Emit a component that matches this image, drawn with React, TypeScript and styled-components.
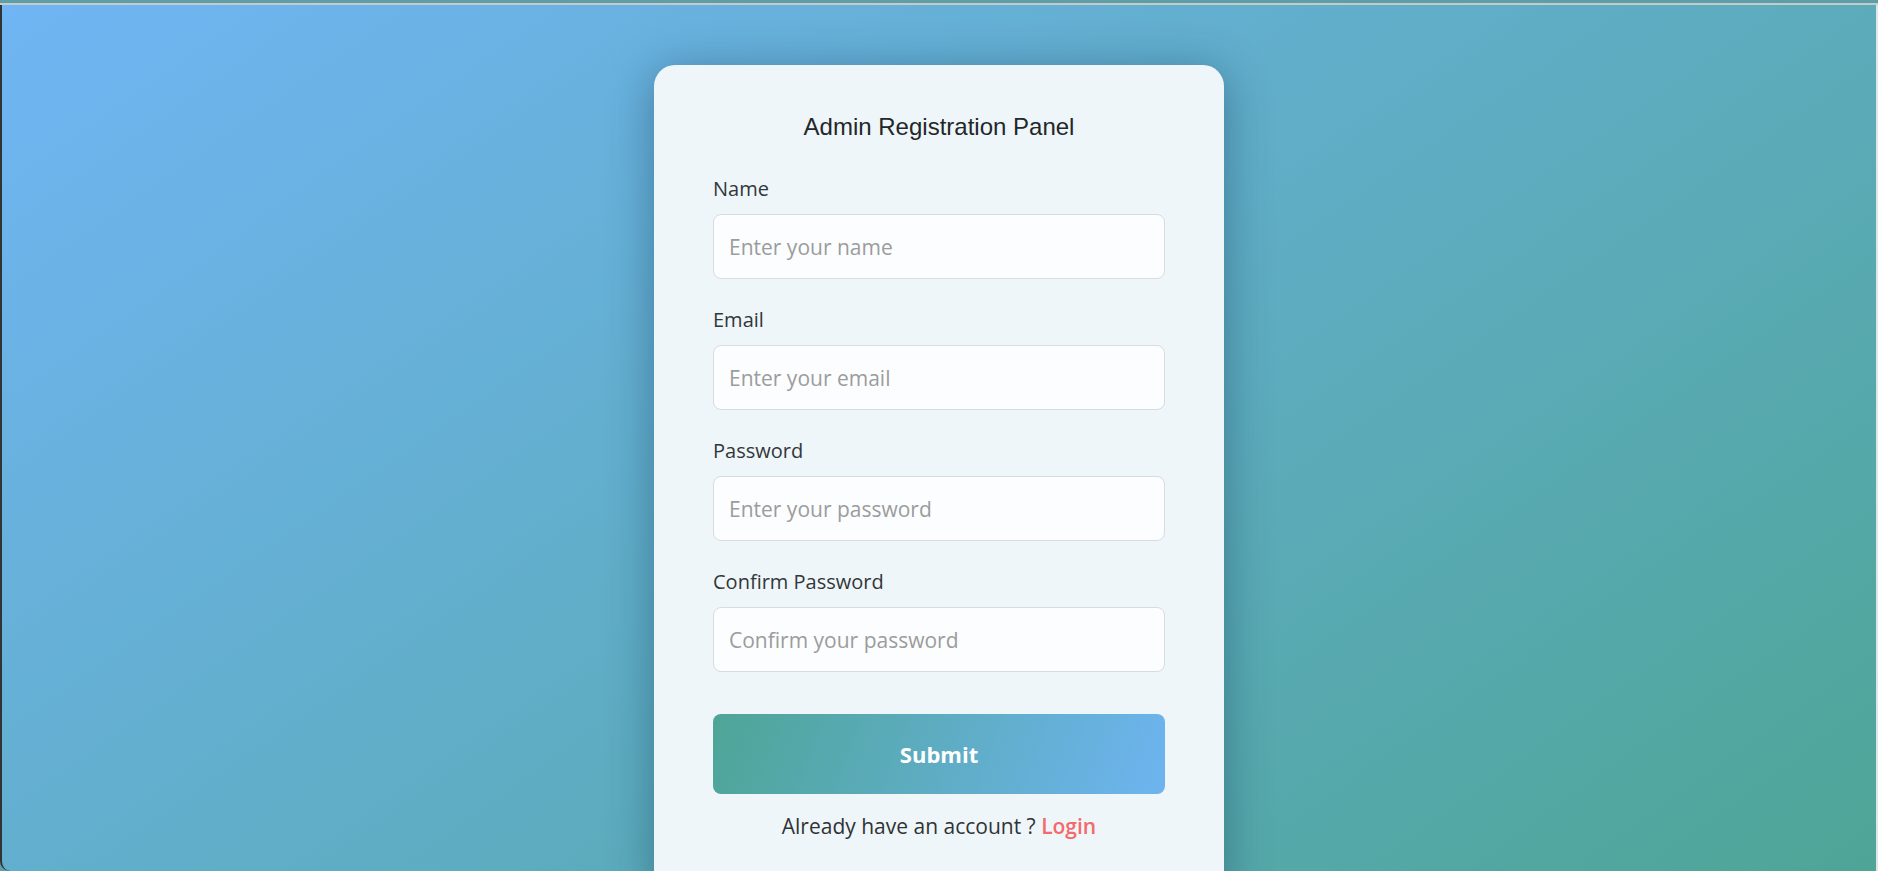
import React from 'react';
import styled, { createGlobalStyle } from 'styled-components';

const GlobalStyle = createGlobalStyle`
    html, body {
        margin: 0;
        padding: 0;
        height: 100%;
        overflow: hidden;
    }

    #root {
        height: 100%;
    }
`;

const Screen = styled.div`
    height: 100%;
    display: flex;
    flex-direction: column;
    background: #5e9ea6;
`;

const TopEdge = styled.div`
    height: 3px;
    flex-shrink: 0;
    border-bottom: 2px solid #c6cacb;
`;

const Page = styled.main`
    flex: 1;
    display: flex;
    flex-direction: column;
    align-items: center;
    border-left: 2px solid #2f3435;
    border-right: 2px solid #dfe6e8;
    border-bottom-left-radius: 10px;
    overflow: hidden;
    background: linear-gradient(145deg, #70b5f4 0%, #4ea596 100%);
    font-family: "Open Sans", "Noto Sans", sans-serif;
`;

const Card = styled.section`
    width: 570px;
    box-sizing: border-box;
    margin-top: 60px;
    padding: 48px 59px 60px;
    background: #eff6f9;
    border-radius: 21px;
    box-shadow: 0 6px 45px rgba(20, 60, 90, 0.45);
`;

const Title = styled.h2`
    margin: 0 0 34px;
    text-align: center;
    font-family: "Liberation Sans", Arial, sans-serif;
    font-size: 24px;
    line-height: 28px;
    font-weight: 400;
    color: #23272a;
`;

const Field = styled.div`
    display: flex;
    flex-direction: column;
    margin-bottom: 27px;
`;

const Label = styled.label`
    font-size: 20px;
    line-height: 27px;
    color: #32373a;
    margin-bottom: 12px;
`;

const Input = styled.input`
    height: 65px;
    box-sizing: border-box;
    padding: 0 15px;
    border: 1px solid #d6dcdf;
    border-radius: 8px;
    background: #fbfdfe;
    font-family: inherit;
    font-size: 21px;
    color: #333;
    outline: none;

    &::placeholder {
        color: #9c9c9c;
    }
`;

const SubmitButton = styled.button`
    width: 100%;
    height: 80px;
    margin-top: 15px;
    border: none;
    border-radius: 8px;
    background: linear-gradient(110deg, #4ea596 0%, #6db4f0 100%);
    color: #fff;
    font-family: inherit;
    font-size: 22px;
    font-weight: 700;
    cursor: pointer;
`;

const Footer = styled.p`
    margin: 19px 0 0;
    text-align: center;
    font-size: 21px;
    line-height: 27px;
    color: #2e3336;
`;

const LoginLink = styled.a`
    color: #f36a6a;
    font-weight: 600;
    text-decoration: none;
`;

const fields = [
    { id: 'name', label: 'Name', type: 'text', placeholder: 'Enter your name' },
    { id: 'email', label: 'Email', type: 'email', placeholder: 'Enter your email' },
    { id: 'password', label: 'Password', type: 'password', placeholder: 'Enter your password' },
    { id: 'confirm', label: 'Confirm Password', type: 'password', placeholder: 'Confirm your password' },
];

const App = () => {
    return (
        <>
            <GlobalStyle />
            <Screen>
                <TopEdge />
                <Page>
                    <Card>
                        <Title>Admin Registration Panel</Title>
                        <form onSubmit={(e) => e.preventDefault()}>
                            {fields.map((f) => (
                                <Field key={f.id}>
                                    <Label htmlFor={f.id}>{f.label}</Label>
                                    <Input id={f.id} type={f.type} placeholder={f.placeholder} />
                                </Field>
                            ))}
                            <SubmitButton type="submit">Submit</SubmitButton>
                        </form>
                        <Footer>
                            Already have an account ? <LoginLink href="#">Login</LoginLink>
                        </Footer>
                    </Card>
                </Page>
            </Screen>
        </>
    );
};

export default App;
